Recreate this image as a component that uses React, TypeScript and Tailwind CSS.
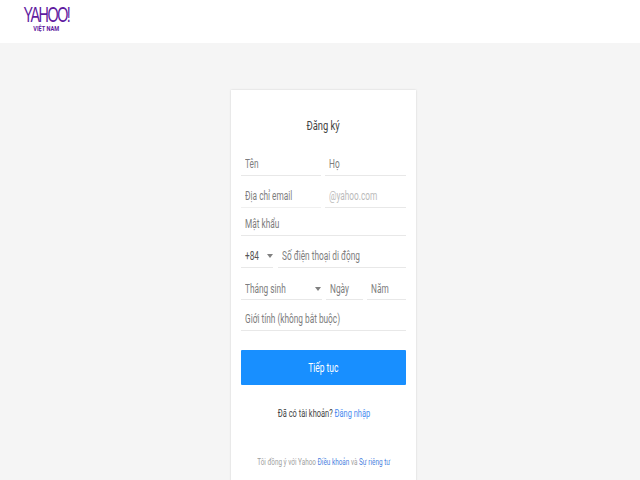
import React from 'react';

const Arrow: React.FC = () => (
  <span className="w-0 h-0 border-x-[3px] border-x-transparent border-t-[4px] border-t-[#808080]" />
);

const Field: React.FC<{ label: string; className?: string; tone?: string; children?: React.ReactNode }> = ({
  label,
  className = '',
  tone = 'text-[#7d7d7d]',
  children,
}) => (
  <div className={`flex items-center justify-between border-b border-[#e8e8e8] pl-1 ${className}`}>
    <span className={`inline-block origin-left scale-x-[0.69] text-[12px] whitespace-nowrap ${tone}`}>{label}</span>
    {children}
  </div>
);

const App: React.FC = () => {
  return (
    <div className="w-[640px] h-[480px] overflow-hidden bg-[#f5f5f5] font-['Roboto',sans-serif]">
      <header className="h-[43px] bg-white pl-[23px] pt-[6px]">
        <div className="w-[47px] flex flex-col items-center text-[#5f1aa0]">
          <span className="scale-x-[0.65] text-[22px] leading-[18px] tracking-[-2.2px] font-light whitespace-nowrap font-['Liberation_Sans',sans-serif]">
            YAHOO!
          </span>
          <span className="mt-[1px] scale-x-[0.8] text-[7px] leading-[8px] font-bold whitespace-nowrap">VIỆT NAM</span>
        </div>
      </header>

      <main className="flex justify-center pl-[7px]">
        <section className="w-[185px] h-[400px] mt-[47px] bg-white shadow-[0_0_2px_rgba(0,0,0,0.15)] px-[10px]">
          <div className="flex justify-center pt-[27px] h-[53px]">
            <h1 className="scale-x-[0.72] text-[13px] leading-[18px] text-[#444444] whitespace-nowrap">Đăng ký</h1>
          </div>

          <div className="flex gap-[4px] h-[33px]">
            <Field label="Tên" className="w-[80px] pt-[9px]" />
            <Field label="Họ" className="flex-1 pt-[9px]" />
          </div>

          <div className="flex gap-[4px] h-[32px]">
            <Field label="Địa chỉ email" className="w-[80px] pt-[8px] border-[#f0f0f0]" />
            <Field label="@yahoo.com" className="flex-1 pt-[8px]" tone="text-[#bbbbbb]" />
          </div>

          <div className="flex h-[28px]">
            <Field label="Mật khẩu" className="w-full pt-[4px]" />
          </div>

          <div className="flex gap-[5px] h-[32px]">
            <Field label="+84" className="w-[32px] pt-[8px]" tone="text-[#555555]">
              <Arrow />
            </Field>
            <Field label="Số điện thoại di động" className="flex-1 pt-[8px]" />
          </div>

          <div className="flex gap-[4px] h-[32px]">
            <Field label="Tháng sinh" className="w-[81px] pt-[10px] pr-[1px]">
              <Arrow />
            </Field>
            <Field label="Ngày" className="w-[37px] pt-[10px]" />
            <Field label="Năm" className="flex-1 pt-[10px]" />
          </div>

          <div className="flex h-[31px]">
            <Field label="Giới tính (không bắt buộc)" className="w-full pt-[7px]" />
          </div>

          <button className="mt-[19px] w-full h-[35px] bg-[#188fff] rounded-[1px] text-white text-[13px] flex items-center justify-center">
            <span className="scale-x-[0.65] whitespace-nowrap">Tiếp tục</span>
          </button>

          <div className="mt-[22px] flex justify-center">
            <p className="scale-x-[0.745] text-[10px] leading-[14px] text-[#444444] whitespace-nowrap">
              Đã có tài khoản? <a className="text-[#4a8cf0]">Đăng nhập</a>
            </p>
          </div>

          <div className="mt-[34px] flex justify-center">
            <p className="scale-x-[0.71] text-[9px] leading-[14px] text-[#a0a0a0] whitespace-nowrap">
              Tôi đồng ý với Yahoo <a className="text-[#4a7fe0]">Điều khoản</a> và <a className="text-[#4a7fe0]">Sự riêng tư</a>
            </p>
          </div>
        </section>
      </main>
    </div>
  );
};

export default App;
